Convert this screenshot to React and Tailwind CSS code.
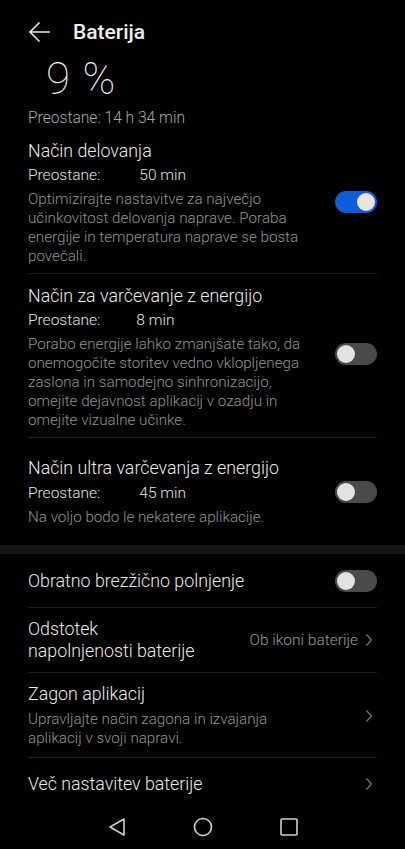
import React from 'react';

const font = { fontFamily: 'Roboto, "Noto Sans", sans-serif' };

function Toggle({ on }) {
    return (
        <div
            className={`relative w-[42px] h-[22px] rounded-full shrink-0 ${on ? 'bg-[#0b5ddb]' : 'bg-[#4a4a4a]'}`}
        >
            <span
                className={`absolute top-[2px] w-[18px] h-[18px] rounded-full ${on ? 'right-[2px] bg-[#ece4dc]' : 'left-[2px] bg-[#e2e2e2]'}`}
            />
        </div>
    );
}

function Chevron() {
    return (
        <svg width="8" height="14" viewBox="0 0 8 14" className="shrink-0">
            <polyline points="1.5,1.5 6.5,7 1.5,12.5" fill="none" stroke="#6f6f6f" strokeWidth="1.4" />
        </svg>
    );
}

function Divider() {
    return <div className="h-px bg-[#1e1e1e] mx-[28px]" />;
}

function Remaining({ value, offset }) {
    return (
        <div className="flex text-[15.5px] leading-[20px] text-[#e4e4e4]">
            <span>Preostane:</span>
            <span className={offset}>{value}</span>
        </div>
    );
}

export default function App() {
    return (
        <div className="w-[405px] h-[849px] bg-black text-[#ebebeb] font-light overflow-hidden flex flex-col" style={font}>
            {/* header */}
            <div className="pt-[16px] h-[48px] px-[28px] flex items-center">
                <svg width="24" height="24" viewBox="0 0 24 24" className="shrink-0">
                    <path d="M22 12H2.5M11.5 2.5L2 12l9.5 9.5" fill="none" stroke="#e6e6e6" strokeWidth="1.6" />
                </svg>
                <span className="ml-[21px] text-[21px] leading-[32px] font-medium text-[#f0f0f0]">Baterija</span>
            </div>

            <div className="mt-[13px] h-[36px] pl-[46px] text-[44px] leading-[36px] font-thin text-[#f2f2f2] tracking-[1px]">
                9 %
            </div>
            <div className="mt-[11px] px-[28px] text-[15.6px] leading-[20px] text-[#a9a9a9]">
                Preostane: 14 h 34 min
            </div>

            {/* Način delovanja */}
            <div className="mt-[12px] px-[28px] pb-[7px] flex items-center justify-between">
                <div>
                    <div className="text-[17.8px] leading-[22px]">Način delovanja</div>
                    <div className="mt-[3px]">
                        <Remaining value="50 min" offset="ml-[39px]" />
                    </div>
                    <div className="mt-[5px] w-[296px] text-[15.2px] leading-[19px] text-[#939393]">
                        Optimizirajte nastavitve za največjo učinkovitost delovanja naprave. Poraba energije in temperatura naprave se bosta povečali.
                    </div>
                </div>
                <div className="self-start mt-[51px]">
                    <Toggle on />
                </div>
            </div>
            <Divider />

            {/* Način za varčevanje */}
            <div className="pt-[11px] px-[28px] pb-[7px] flex items-center justify-between">
                <div>
                    <div className="text-[17.8px] leading-[22px]">Način za varčevanje z energijo</div>
                    <div className="mt-[3px]">
                        <Remaining value="8 min" offset="ml-[36px]" />
                    </div>
                    <div className="mt-[5px] w-[296px] text-[15.2px] leading-[19px] text-[#939393]">
                        Porabo energije lahko zmanjšate tako, da onemogočite storitev vedno vklopljenega zaslona in samodejno sinhronizacijo, omejite dejavnost aplikacij v ozadju in omejite vizualne učinke.
                    </div>
                </div>
                <div className="self-start mt-[58px]">
                    <Toggle />
                </div>
            </div>
            <Divider />

            {/* Ultra */}
            <div className="pt-[19px] px-[28px] pb-[18px] flex items-center justify-between">
                <div>
                    <div className="text-[17.8px] leading-[22px]">Način ultra varčevanja z energijo</div>
                    <div className="mt-[4px]">
                        <Remaining value="45 min" offset="ml-[39px]" />
                    </div>
                    <div className="mt-[5px] text-[15.2px] leading-[19px] text-[#939393]">
                        Na voljo bodo le nekatere aplikacije.
                    </div>
                </div>
                <Toggle />
            </div>

            <div className="h-[9px] bg-[#151515]" />

            <div className="h-[53px] px-[28px] flex items-center justify-between">
                <span className="text-[17.8px] leading-[22px]">Obratno brezžično polnjenje</span>
                <Toggle />
            </div>
            <Divider />

            <div className="h-[64px] px-[28px] flex items-center justify-between">
                <span className="text-[17.8px] leading-[22px]">
                    Odstotek
                    <br />
                    napolnjenosti baterije
                </span>
                <div className="flex items-center gap-[7px] pr-[4px]">
                    <span className="text-[15.5px] leading-[20px] text-[#9a9a9a]">Ob ikoni baterije</span>
                    <Chevron />
                </div>
            </div>
            <Divider />

            <div className="pt-[10px] pb-[9px] px-[28px] flex items-center justify-between">
                <div>
                    <div className="text-[17.8px] leading-[22px]">Zagon aplikacij</div>
                    <div className="mt-[5px] text-[15.2px] leading-[19px] text-[#939393]">
                        Upravljajte način zagona in izvajanja
                        <br />
                        aplikacij v svoji napravi.
                    </div>
                </div>
                <div className="pr-[4px]">
                    <Chevron />
                </div>
            </div>
            <Divider />

            <div className="h-[52px] px-[28px] flex items-center justify-between">
                <span className="text-[17.8px] leading-[22px]">Več nastavitev baterije</span>
                <div className="pr-[4px]">
                    <Chevron />
                </div>
            </div>

            {/* nav bar */}
            <div className="h-[34px] flex items-center justify-center gap-[67px]">
                <svg width="18" height="20" viewBox="0 0 18 20">
                    <path d="M16 2L2 10l14 8z" fill="none" stroke="#cfcfcf" strokeWidth="1.6" strokeLinejoin="round" />
                </svg>
                <svg width="20" height="20" viewBox="0 0 20 20">
                    <circle cx="10" cy="10" r="8.5" fill="none" stroke="#cfcfcf" strokeWidth="1.6" />
                </svg>
                <svg width="18" height="18" viewBox="0 0 18 18">
                    <rect x="1" y="1" width="16" height="16" rx="1" fill="none" stroke="#cfcfcf" strokeWidth="1.6" />
                </svg>
            </div>
        </div>
    );
}
